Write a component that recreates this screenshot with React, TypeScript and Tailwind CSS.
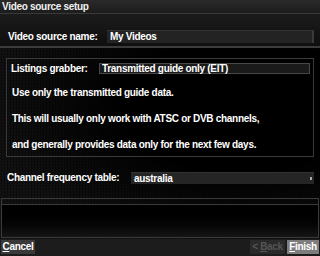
import React from 'react';

function Field({ children, className }: { children: React.ReactNode; className: string }) {
  return (
    <div className={`flex items-center pl-[3px] text-white border-t border-t-[#333] border-r-2 border-r-[#3a3a3a] ${className}`}>
      {children}
    </div>
  );
}

export default function App() {
  return (
    <div
      className="relative w-[320px] h-[256px] overflow-hidden bg-black text-[10px] font-bold tracking-[-0.3px] text-white leading-none"
      style={{ fontFamily: '"Liberation Sans", Arial, sans-serif' }}
    >
      {/* title bar */}
      <div className="h-[14px] bg-gradient-to-b from-[#2a2a2a] to-[#1c1c1c] border-b border-b-[#3a3a3a] pl-[2px] flex items-center">
        <span className="text-[#f0f0f0]">Video source setup</span>
      </div>

      {/* name row */}
      <div className="h-[34px] bg-gradient-to-b from-[#1b1b1b] to-[#0f0f0f] border-b-2 border-b-[#3c3c3c] pt-[16px] flex items-start">
        <span className="w-[107px] pl-[8px] h-[13px] flex items-center">Video source name:</span>
        <Field className="w-[207px] h-[13px] bg-[#232323]">My Videos</Field>
      </div>

      {/* main area */}
      <div className="h-[191px] bg-[repeating-conic-gradient(#0b0b0b_0_25%,#141414_0_50%)] bg-[length:3px_3px] relative">
        <div className="absolute inset-0 bg-[radial-gradient(ellipse_at_75%_30%,#000_35%,transparent_75%)]" />
        <div className="relative pt-[10px]">
          <div className="ml-[6px] w-[308px] h-[99px] border border-[#3a3a3a] pt-[4px] pr-[3px]">
            <div className="flex items-center">
              <span className="w-[92px] pl-[4px]">Listings grabber:</span>
              <div className="w-[211px] h-[11px] bg-[#1a1a1a] border border-[#484848] flex items-center pl-[2px]">
                Transmitted guide only (EIT)
              </div>
            </div>
            <div className="pl-[5px] mt-[14px] flex flex-col gap-[16px]">
              <span>Use only the transmitted guide data.</span>
              <span>This will usually only work with ATSC or DVB channels,</span>
              <span>and generally provides data only for the next few days.</span>
            </div>
          </div>

          <div className="flex items-center mt-[15px]">
            <span className="w-[131px] pl-[7px]">Channel frequency table:</span>
            <div className="w-[183px] h-[12px] bg-[#252525] border-t border-t-[#333] flex items-center pl-[3px] relative">
              australia
              <div className="absolute right-[2px] top-[4px] w-[2px] h-[3px] bg-[#aaa]" />
            </div>
          </div>

          <div className="ml-[1px] mt-[14px] w-[318px] h-[40px] border border-[#3a3a3a] flex flex-col">
            <div className="h-[6px] border-b border-b-[#3a3a3a]" />
            <div className="flex-1 bg-gradient-to-b from-black to-[#151515]" />
          </div>
        </div>
      </div>

      {/* button bar */}
      <div className="h-[17px] bg-[#1c1c1c] flex items-start pt-[1px] px-[1px]">
        <div className="w-[34px] h-[14px] bg-[#393939] flex items-center justify-center text-white">
          <span><span className="underline">C</span>ancel</span>
        </div>
        <div className="ml-auto w-[35px] h-[14px] bg-[#2a2a2a] flex items-center justify-center text-[#555]">
          <span>&lt; <span className="underline">B</span>ack</span>
        </div>
        <div className="ml-[2px] w-[32px] h-[14px] bg-[#7d7d7d] flex items-center justify-center text-white">
          <span><span className="underline">F</span>inish</span>
        </div>
      </div>
    </div>
  );
}
